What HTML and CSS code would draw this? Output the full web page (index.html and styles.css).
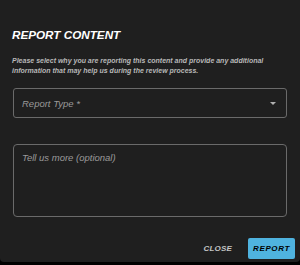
FILE: index.html
```html
<!DOCTYPE html>
<html>
<head>
<meta charset="utf-8">
<link rel="stylesheet" href="styles.css">
</head>
<body>
<div class="dialog">
  <h1 class="title">REPORT CONTENT</h1>
  <p class="desc">Please select why you are reporting this content and provide any additional information that may help us during the review process.</p>
  <div class="select">
    <span class="placeholder">Report Type *</span>
    <span class="arrow"></span>
  </div>
  <div class="textarea">
    <span class="placeholder">Tell us more (optional)</span>
  </div>
  <div class="actions">
    <button class="btn close">CLOSE</button>
    <button class="btn report">REPORT</button>
  </div>
</div>
</body>
</html>
```

FILE: styles.css
```css
html, body {
  margin: 0;
  padding: 0;
  background: #000;
  width: 300px;
  height: 265px;
  overflow: hidden;
}
.dialog {
  box-sizing: border-box;
  width: 300px;
  height: 262px;
  background: #1f1f1f;
  border-radius: 0 0 4px 4px;
  padding: 29px 13px 0 13px;
  font-family: "Liberation Sans", Arial, sans-serif;
  display: flex;
  flex-direction: column;
}
.title {
  margin: 0 0 0 -1px;
  font-size: 11.7px;
  line-height: 11px;
  font-weight: bold;
  font-style: italic;
  color: #fff;
}
.desc {
  margin: 16px 0 0 -1px;
  font-size: 7px;
  line-height: 10px;
  font-style: italic;
  font-weight: bold;
  color: #b8b8b8;
}
.select {
  margin-top: 12px;
  height: 30px;
  box-sizing: border-box;
  border: 1px solid #6a6a6a;
  border-radius: 3px;
  display: flex;
  align-items: center;
  justify-content: space-between;
  padding: 0 10px 0 8px;
}
.placeholder {
  font-size: 9.5px;
  font-style: italic;
  color: #9a9a9a;
}
.arrow {
  width: 0;
  height: 0;
  border-left: 3px solid transparent;
  border-right: 3px solid transparent;
  border-top: 3px solid #b0b0b0;
}
.textarea {
  margin-top: 26px;
  height: 73px;
  box-sizing: border-box;
  border: 1px solid #6a6a6a;
  border-radius: 4px;
  padding: 5px 8px;
  line-height: 11px;
}
.actions {
  margin-top: 21px;
  display: flex;
  justify-content: flex-end;
  align-items: center;
  gap: 16px;
  margin-right: -8px;
}
.btn {
  font-family: "Liberation Sans", Arial, sans-serif;
  font-size: 8px;
  font-weight: bold;
  font-style: italic;
  letter-spacing: 0.6px;
  border: none;
  padding: 0;
  background: none;
}
.close {
  color: #c4c4c4;
  letter-spacing: 0.2px;
}
.report {
  background: #4fb3df;
  color: #000;
  width: 47px;
  height: 21px;
  border-radius: 2px;
}
```
